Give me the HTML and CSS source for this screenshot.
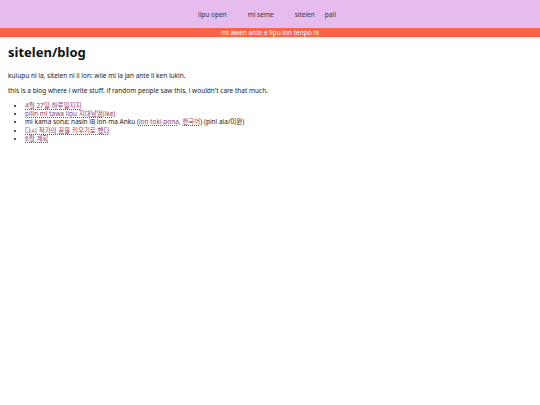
FILE: index.html
```html
<!DOCTYPE html>
<html lang="tok">
<head>
<meta charset="utf-8">
<title>sitelen/blog</title>
<link rel="stylesheet" href="styles.css">
</head>
<body>
<header class="site-header">
  <nav class="nav">
    <a class="nav-link" href="#">lipu open</a>
    <a class="nav-link" href="#">mi seme</a>
    <a class="nav-link" href="#">sitelen</a>
    <a class="nav-link nav-link-tight" href="#">pali</a>
  </nav>
  <div class="banner">mi awen ante e lipu lon tenpo ni</div>
</header>
<main class="content">
  <h1 class="title">sitelen/blog</h1>
  <p class="text">kulupu ni la, sitelen ni li lon: wile mi la jan ante li ken lukin.</p>
  <p class="text">this is a blog where i write stuff. if random people saw this, i wouldn't care that much.</p>
  <ul class="posts">
    <li><a class="post-link" href="#">4월 27일 하루일지지</a></li>
    <li><a class="post-link" href="#">pilin mi tawa lipu 지대남엄(ike)</a></li>
    <li>mi kama sona: nasin lB lon ma Anku (<a class="post-link" href="#">lon toki pona</a>, <a class="post-link" href="#">한국어</a>) (pini ala/미완)</li>
    <li><a class="post-link" href="#">다시 작가의 꿈을 키우기로 했다</a></li>
    <li><a class="post-link" href="#">6월 계획</a></li>
  </ul>
</main>
</body>
</html>
```

FILE: styles.css
```css
html, body {
  margin: 0;
  padding: 0;
  background: #ffffff;
}
body {
  font-family: "Noto Sans", "Noto Sans CJK KR", sans-serif;
  font-size: 6.5px;
  color: #222222;
}
.site-header {
  display: flex;
  flex-direction: column;
}
.nav {
  background: #e6bcee;
  height: 28px;
  display: flex;
  align-items: center;
  padding-left: 198px;
  gap: 21px;
}
.nav-link {
  color: #333333;
  text-decoration: none;
}
.nav-link-tight {
  margin-left: -11px;
}
.banner {
  background: #ff6347;
  color: #ffffff;
  height: 9px;
  line-height: 9px;
  text-align: center;
  border-bottom: 1px solid #ffe9e3;
}
.content {
  padding: 0 8px;
}
.title {
  font-size: 13px;
  font-weight: 700;
  margin: 5px 0 11px;
  line-height: 18px;
  color: #111111;
}
.text {
  margin: 0 0 7px;
  line-height: 8px;
}
.posts {
  margin: 0;
  padding-left: 17px;
  line-height: 8.2px;
}
.post-link {
  color: #9c3a66;
  text-decoration: underline dotted;
  text-underline-offset: 1px;
}
```
